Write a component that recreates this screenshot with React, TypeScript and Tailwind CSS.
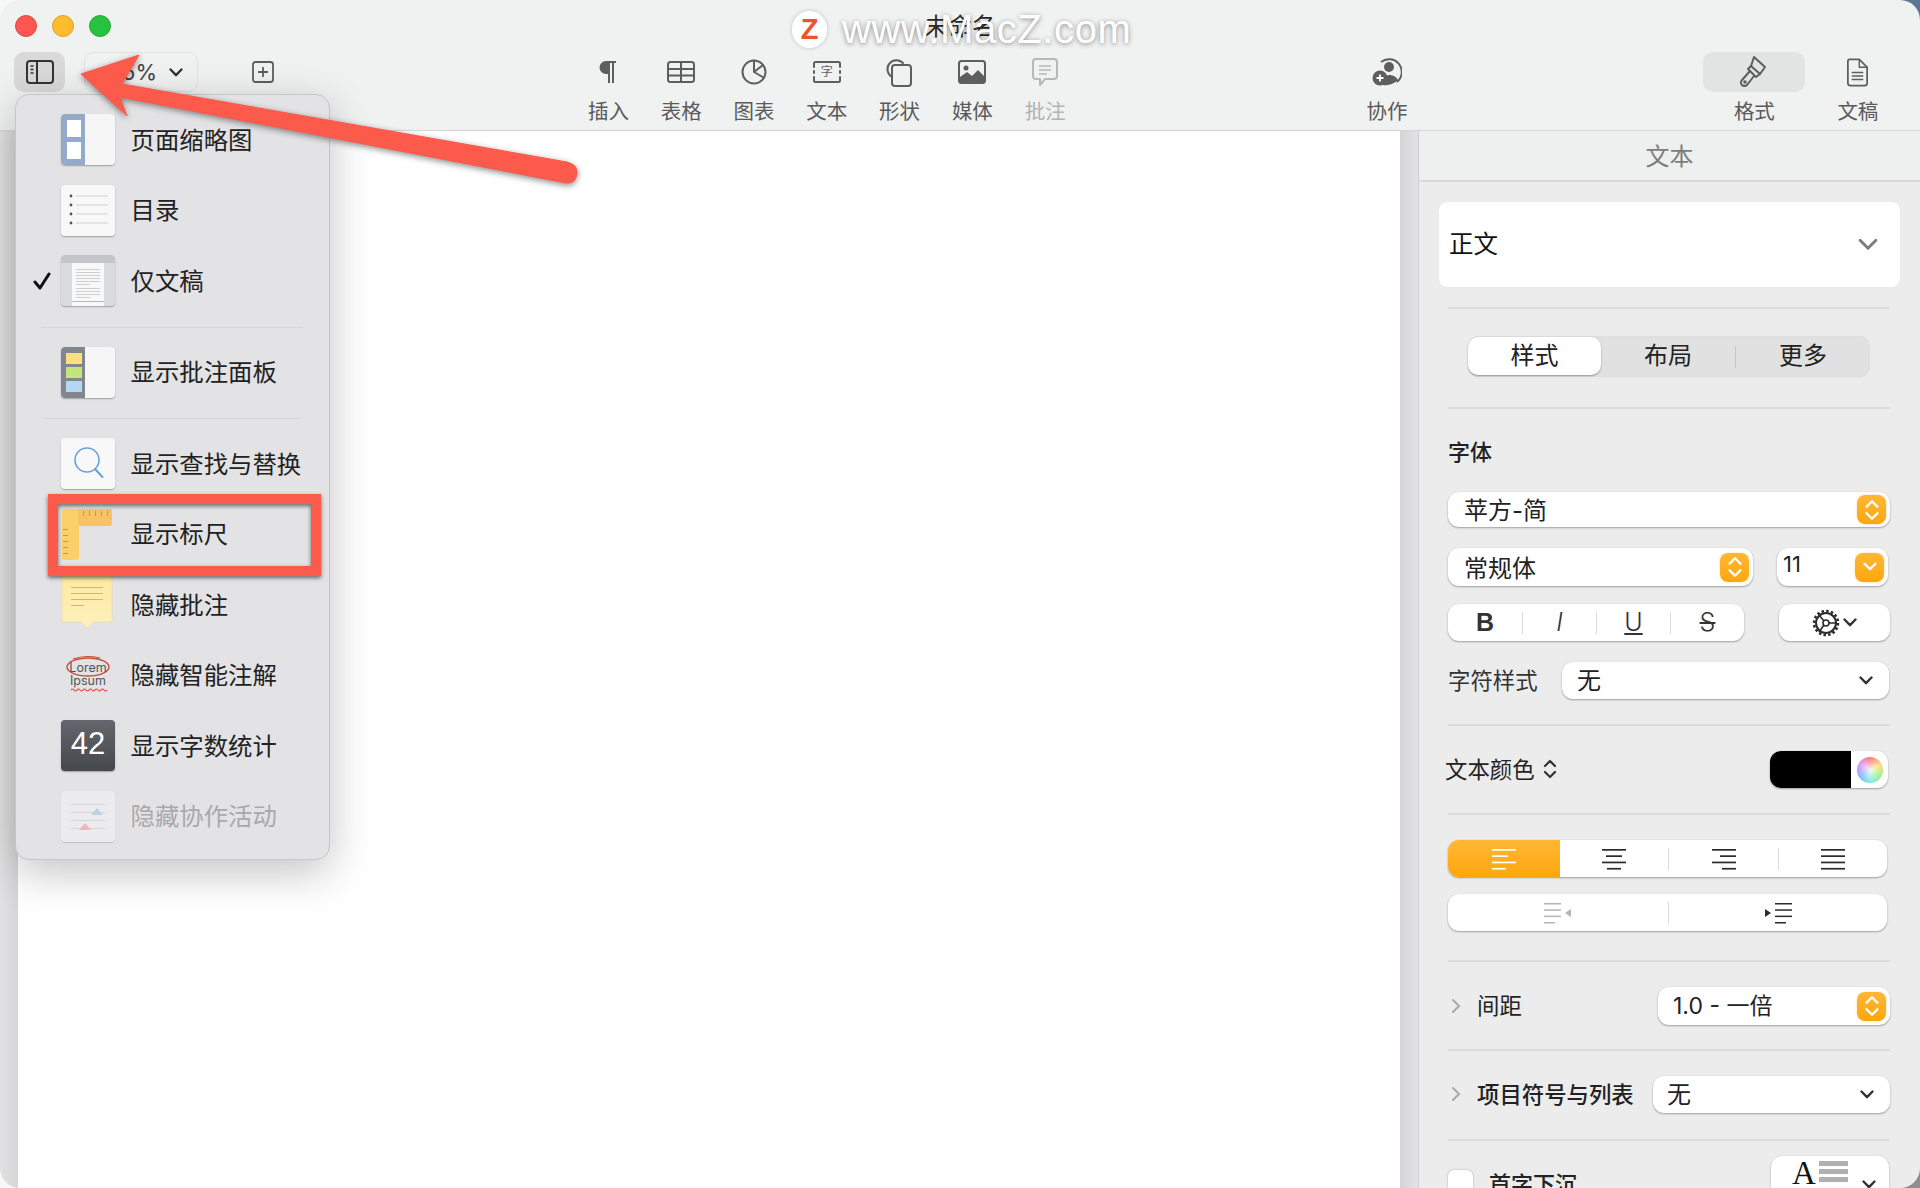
import React from "react";

const ctl = "bg-white rounded-[11px] shadow-[0_1px_2px_rgba(0,0,0,0.32),0_0_1px_rgba(0,0,0,0.12)]";
const hr = "h-[2px] w-[442px] bg-[#dcdcdc]";
const Chevron = ({ w = 14, h = 9, c = "#333", sw = 2.4 }: { w?: number; h?: number; c?: string; sw?: number }) => (
  <svg width={w} height={h} viewBox="0 0 14 9" fill="none"><path d="M1.5 1.5 7 7.2l5.5-5.7" stroke={c} strokeWidth={sw} strokeLinecap="round" strokeLinejoin="round" /></svg>
);
const Stepper = ({ single }: { single?: boolean }) => (
  <div className="w-[29px] h-[29px] rounded-[8px] bg-linear-to-b from-[#ffb733] to-[#ffa608] flex items-center justify-center shadow-[0_0_2px_rgba(255,170,20,0.5)]">
    <svg width="18" height="24" viewBox="0 0 16 22" fill="none" stroke="#fff" strokeWidth="2.2" strokeLinecap="round" strokeLinejoin="round">
      {single ? <path d="M3 8l5 5 5-5" /> : <><path d="M3 8l5-5 5 5" /><path d="M3 14l5 5 5-5" /></>}
    </svg>
  </div>
);

const Tool = ({ label, children, dim, active, className = "w-[72.8px]" }: { label: string; children: React.ReactNode; dim?: boolean; active?: boolean; className?: string }) => (
  <div className={`flex flex-col items-center ${className}`}>
    <div className={`h-10 w-full flex items-center justify-center rounded-[10px] ${active ? "bg-[#e2e3e3]" : ""}`}>{children}</div>
    <div className={`mt-[6px] text-[20.5px] leading-[28px] ${dim ? "text-[#b3b3b3]" : "text-[#5a5a5a]"}`}>{label}</div>
  </div>
);

const stroke = { fill: "none", stroke: "#5e5e5e", strokeWidth: 2, strokeLinecap: "round", strokeLinejoin: "round" } as const;

const LinesIcon = ({ a, c = "#2b2b2b" }: { a: "l" | "c" | "r" | "j"; c?: string }) => {
  const ws = a === "j" ? [24, 24, 24, 24] : [24, 16, 24, 14];
  return (
    <svg width="24" height="22" viewBox="0 0 24 22">
      {ws.map((w, i) => {
        const x = a === "l" || a === "j" ? 0 : a === "c" ? (24 - w) / 2 : 24 - w;
        return <rect key={i} x={x} y={1 + i * 6.3} width={w} height="1.7" fill={c} />;
      })}
    </svg>
  );
};

const base = "block rounded-[4px] shadow-[0_1px_1.5px_rgba(0,0,0,0.3)]";
const IThumb = () => (
  <svg className={base} width="54" height="51" viewBox="0 0 54 51">
    <rect width="54" height="51" rx="3" fill="#f6f6f7" /><path d="M3 0h21v51H3a3 3 0 0 1-3-3V3a3 3 0 0 1 3-3z" fill="#94aacb" />
    <rect x="6" y="6" width="14" height="17" fill="#fff" /><rect x="6" y="28" width="14" height="17" fill="#fff" />
  </svg>
);
const IToc = () => (
  <svg className={base} width="54" height="51" viewBox="0 0 54 51">
    <rect width="54" height="51" rx="3" fill="#f8f8f8" />
    {[11, 20, 29, 38].map((y) => <g key={y}><circle cx="10" cy={y} r="1.4" fill="#555" /><rect x="15" y={y - 0.5} width="32" height="1" fill="#d0d0d0" /></g>)}
  </svg>
);
const IDoc = () => (
  <svg className={base} width="54" height="51" viewBox="0 0 54 51">
    <rect width="54" height="51" rx="3" fill="#dadbdd" /><path d="M3 0h48a3 3 0 0 1 3 3v5H0V3a3 3 0 0 1 3-3z" fill="#c4c5c8" />
    <rect x="11" y="8" width="32" height="43" fill="#f8f8f8" />
    {[14, 17, 20, 23, 26, 29, 33, 36, 39, 42].map((y, i) => <rect key={y} x="15" y={y} width={i === 5 || i === 9 ? 14 : 24} height="0.8" fill="#c4c4c4" />)}
    <rect x="11" y="46" width="32" height="1" fill="#b8b8b8" />
  </svg>
);
const IPanel = () => (
  <svg className={base} width="54" height="51" viewBox="0 0 54 51">
    <rect width="54" height="51" rx="3" fill="#f6f6f7" /><path d="M3 0h21v51H3a3 3 0 0 1-3-3V3a3 3 0 0 1 3-3z" fill="#82868e" />
    <rect x="5" y="6" width="16" height="11" fill="#fbdf85" /><rect x="5" y="20" width="16" height="11" fill="#c4e47f" /><rect x="5" y="34" width="16" height="11" fill="#b4d7f4" />
  </svg>
);
const IFind = () => (
  <svg className={base} width="54" height="51" viewBox="0 0 54 51">
    <rect width="54" height="51" rx="3" fill="#f8f8f9" /><circle cx="26" cy="22" r="12" fill="none" stroke="#6aa0d8" strokeWidth="1.6" /><path d="M34 31l7.5 8" stroke="#6aa0d8" strokeWidth="2" strokeLinecap="round" />
  </svg>
);
const IRuler = () => (
  <svg width="54" height="51" viewBox="0 0 54 51" className="block">
    <rect x="1" y="0" width="17" height="51" rx="2" fill="#fbd06a" /><rect x="17" y="0" width="34" height="17" rx="2" fill="#f6c465" />
    {[22, 28, 34, 40, 46].map((x) => <rect key={x} x={x} y="2" width="1" height="5" fill="#c99a3f" />)}
    {[20, 26, 32, 38, 44].map((y) => <rect key={y} x="2" y={y} width="5" height="1" fill="#c99a3f" />)}
  </svg>
);
const INote = () => (
  <svg width="54" height="56" viewBox="0 0 54 56" className="block -mt-[3px]">
    <defs><linearGradient id="nt" x1="0" y1="0" x2="0" y2="1"><stop offset="0" stopColor="#fdeaa0" /><stop offset="1" stopColor="#fdf0bc" /></linearGradient></defs>
    <path d="M1 0h50v45a2 2 0 0 1-2 2H32l-6 6-6-6H3a2 2 0 0 1-2-2z" fill="url(#nt)" stroke="#e7d7a0" strokeWidth="0.6" />
    {[12, 18, 24, 30].map((y, i) => <rect key={y} x="10" y={y} width={i === 3 ? 13 : 32} height="0.9" fill="#c9b36e" />)}
  </svg>
);
const ILorem = () => (
  <svg width="54" height="51" viewBox="0 0 54 51" className="block">
    <ellipse cx="27" cy="17" rx="21" ry="9" fill="none" stroke="#c94a3a" strokeWidth="1.4" />
    <path d="M12 9c8-3 18-3 27-1" fill="none" stroke="#c94a3a" strokeWidth="1.2" />
    <text x="27" y="21.5" textAnchor="middle" fontSize="12.5" fill="#555" fontFamily="Inter, sans-serif">Lorem</text>
    <text x="27" y="35" textAnchor="middle" fontSize="12.5" fill="#555" fontFamily="Inter, sans-serif">Ipsum</text>
    <path d="M10 40q1.5-2 3 0t3 0 3 0 3 0 3 0 3 0 3 0 3 0 3 0 3 0 3 0 3 0" fill="none" stroke="#d9483a" strokeWidth="1.1" />
  </svg>
);
const ICount = () => (
  <div className={`${base} w-[54px] h-[51px] bg-linear-to-b from-[#63666c] to-[#45484d] text-white text-[31px] leading-[48px] text-center font-['Liberation_Sans',sans-serif]`}>42</div>
);
const ICollab = () => (
  <svg className="block rounded-[4px] shadow-[0_0.5px_1px_rgba(0,0,0,0.15)]" width="54" height="51" viewBox="0 0 54 51">
    <rect width="54" height="51" rx="3" fill="#ececef" />
    {[13, 21, 29, 37].map((y) => <rect key={y} x="10" y={y} width="34" height="0.9" fill="#d4d4d6" />)}
    <path d="M30 24l6-7 6 7z" fill="#b6d3ea" /><path d="M18 39l6-7 6 7z" fill="#f0b6c0" />
  </svg>
);

const MenuRow = ({ icon, label, checked, dim }: { icon: React.ReactNode; label: string; checked?: boolean; dim?: boolean }) => (
  <div className="h-[70.5px] flex items-center pl-[17px]">
    <div className="w-[18px] mr-[10px]">
      {checked && <svg width="18" height="18" viewBox="0 0 18 18" fill="none"><path d="M2 10l5 6L16 2" stroke="#111" strokeWidth="3" strokeLinecap="round" strokeLinejoin="round" /></svg>}
    </div>
    <div className="w-[54px] -mt-[1px]">{icon}</div>
    <div className={`ml-[15.500px] text-[24.400px] ${dim ? "text-[#a9a9ab]" : "text-[#222]"}`}>{label}</div>
  </div>
);
const MenuSep = () => (
  <div className="h-[21px] flex items-center pl-[25px]"><div className="h-[1px] w-[262px] bg-[#d5d5d7]" /></div>
);

export default function App() {
  return (
    <div className="relative w-[1920px] h-[1188px] overflow-hidden bg-linear-to-b from-[#5b7595] to-[#8f8f8f] font-['Inter','Noto_Sans_CJK_SC',sans-serif] text-[#222]">
      <div className="absolute left-0 top-0 bottom-0 w-[60px] bg-[#f8f8f8]" />
      <div className="relative h-full rounded-[20px] overflow-hidden flex flex-col">
        {/* title bar */}
        <div className="h-[52px] bg-[#f0f1f1] relative flex items-center pl-[15px] gap-[15px]">
          <div className="w-[22px] h-[22px] rounded-full bg-[#fc5753] border border-[#e0443e]" />
          <div className="w-[22px] h-[22px] rounded-full bg-[#fdbc2e] border border-[#dea123]" />
          <div className="w-[22px] h-[22px] rounded-full bg-[#27c33f] border border-[#1dad2b]" />
          <div className="absolute left-0 right-0 top-[10px] text-center text-[24px] leading-[34px] text-[#2a2a2a]">未命名</div>
        </div>
        {/* toolbar */}
        <div className="h-[79px] bg-[#f0f1f1] border-b border-[#d6d6d6] flex items-start pl-[14px]">
          <div className="w-[51px] h-10 rounded-[10px] bg-[#d9d9d9] flex items-center justify-center">
            <svg width="28" height="24" viewBox="0 0 28 24" fill="none" stroke="#333" strokeWidth="2"><rect x="1" y="1" width="26" height="22" rx="3" /><path d="M11 1v22" /><path d="M4.5 6h3M4.5 9.500h3M4.500 13h3" strokeWidth="1.400" /></svg>
          </div>
          <div className="ml-[19px] w-[114px] h-10 rounded-[10px] border border-[#e2e2e2] flex items-center justify-end pr-[14px] gap-[12px]">
            <span className="text-[22px] text-[#444]">75%</span>
            <Chevron />
          </div>
          <div className="ml-[54px] w-[22px] h-10 flex items-center justify-center">
            <svg width="22" height="22" viewBox="0 0 22 22" fill="none" stroke="#5e5e5e" strokeWidth="1.800"><rect x="1" y="1" width="20" height="20" rx="2.500" /><path d="M11 6v10M6 11h10" /></svg>
          </div>
          <div className="ml-[298px] flex">
            <Tool label="插入">
              <svg width="20" height="24" viewBox="0 0 20 24"><path d="M18 1H8a6.500 6.500 0 0 0 0 13h2v9h2V3h2v20h2V3h2z" fill="#5e5e5e" /></svg>
            </Tool>
            <Tool label="表格">
              <svg width="28" height="22" viewBox="0 0 28 22" {...stroke}><rect x="1" y="1" width="26" height="20" rx="2.500" /><path d="M1 8h26M1 14.500h26M14 1v20" /></svg>
            </Tool>
            <Tool label="图表">
              <svg width="26" height="26" viewBox="0 0 26 26" {...stroke}><circle cx="13" cy="13" r="11.500" /><path d="M13 1.500V13l9.500 5.500M13 13l9-7" /></svg>
            </Tool>
            <Tool label="文本">
              <div className="relative w-[28px] h-[22px]">
                <svg width="28" height="22" viewBox="0 0 28 22" className="absolute inset-0" {...stroke}><path d="M1 6V2.500A1.500 1.500 0 0 1 2.500 1h23A1.500 1.500 0 0 1 27 2.500V6M1 16v3.500A1.500 1.500 0 0 0 2.500 21h23a1.500 1.500 0 0 0 1.500-1.500V16M1 10v2M27 10v2" /></svg>
                <div className="absolute inset-0 flex items-center justify-center text-[12px] leading-none text-[#5e5e5e]">字</div>
              </div>
            </Tool>
            <Tool label="形状">
              <svg className="-ml-[4px]" width="28" height="30" viewBox="0 0 28 30" {...stroke}><path d="M8 20A9 9 0 1 1 19 6" /><rect x="8" y="8" width="19" height="21" rx="3" /></svg>
            </Tool>
            <Tool label="媒体">
              <svg width="28" height="24" viewBox="0 0 28 24"><rect x="1" y="1" width="26" height="22" rx="2.500" fill="none" stroke="#5e5e5e" strokeWidth="2" /><circle cx="8" cy="8" r="2.500" fill="#5e5e5e" /><path d="M2 22v-5l7-5 5 4 6-6 6 6v6z" fill="#5e5e5e" /></svg>
            </Tool>
            <Tool label="批注" dim>
              <svg width="26" height="28" viewBox="0 0 26 28" fill="none" stroke="#b8b8b8" strokeWidth="2" strokeLinejoin="round"><path d="M4 1h18a3 3 0 0 1 3 3v14a3 3 0 0 1-3 3H13l-5 6v-6H4a3 3 0 0 1-3-3V4a3 3 0 0 1 3-3z" /><path d="M7 8h12M7 12h12M7 16h8" strokeWidth="1.600" /></svg>
            </Tool>
          </div>
          <div className="ml-[269px]">
            <Tool label="协作">
              <svg width="30" height="30" viewBox="0 0 30 30"><path d="M9 5A12 12 0 1 1 25 25" fill="none" stroke="#5e5e5e" strokeWidth="2" /><circle cx="17" cy="10" r="5" fill="#5e5e5e" /><path d="M11 28c0-6 3-10 6-10s7 1 9 5c-3 3-9 6-15 5z" fill="#5e5e5e" /><circle cx="8" cy="21" r="7.500" fill="#5e5e5e" /><path d="M8 17.500v7M4.500 21h7" stroke="#fff" strokeWidth="1.800" /></svg>
            </Tool>
          </div>
          <div className="ml-[280px]">
            <Tool label="格式" active className="w-[102px]">
              <svg width="28" height="34" viewBox="0 0 28 34" {...stroke}><path d="M14 2l11 10-5 7-9-8z" /><path d="M11 11l-3 3 8 8 4-3" /><path d="M10 16l-8 9a3.500 3.500 0 0 0 5 5l7-9" /><circle cx="5" cy="27" r="0.800" /></svg>
            </Tool>
          </div>
          <div className="ml-[16px]">
            <Tool label="文稿" className="w-[73px]">
              <svg width="21" height="29" viewBox="0 0 24 32" {...stroke}><path d="M3 1h11l9 9v18a3 3 0 0 1-3 3H4a3 3 0 0 1-3-3V3a2 2 0 0 1 2-2z" /><path d="M14 1v9h9M6 16h12M6 20h12M6 24h12" strokeWidth="1.600" /></svg>
            </Tool>
          </div>
        </div>
        {/* body */}
        <div className="flex-1 flex min-h-0">
          <div className="w-[18px] bg-[linear-gradient(to_right,#e2e2e3,#d5d5d7)]" />
          <div className="flex-1 bg-white" />
          <div className="w-[18px] bg-[linear-gradient(to_right,#d4d4d6,#e3e3e5)]" />
          <div className="w-[502px] bg-[#ececec] border-l border-[#cfcfcf] overflow-hidden">
            <div className="h-[51px] border-b-2 border-[#dadada] bg-[#eef0f0] text-[24px] leading-[52px] text-center text-[#7d7d7d]">文本</div>
            <div className="mt-[20px] ml-[20px] w-[461px] h-[85px] bg-white rounded-[8px] flex items-center justify-between pl-[10px] pr-[22px] shadow-[0_0_1px_rgba(0,0,0,0.1)]">
              <span className="text-[24.500px] text-[#111]">正文</span>
              <Chevron w={20} h={13} c="#7c7c7c" sw={2} />
            </div>
            <div className="pl-[29px]">
              <div className={`mt-[20px] ${hr}`} />
              <div className="mt-[27px] ml-[20px] w-[402px] h-[41px] rounded-[11px] bg-[#e1e1e1] flex items-center text-[24px] leading-[36px] shadow-[inset_0_0_1px_rgba(0,0,0,0.15)]">
                <div className="w-[133px] h-[38px] -mt-[1px] rounded-[10px] bg-white flex items-center justify-center shadow-[0_1px_2px_rgba(0,0,0,0.35)]">样式</div>
                <div className="w-[134px] text-center -mt-[2px]">布局</div>
                <div className="w-[1px] h-[22px] bg-[#c8c8c8]" />
                <div className="flex-1 text-center -mt-[2px]">更多</div>
              </div>
              <div className={`mt-[30px] ${hr}`} />
              <div className="mt-[28px] h-[30px] leading-[30px] text-[22px] font-medium">字体</div>
              <div className={`mt-[25px] w-[442px] h-[35px] ${ctl} flex items-center justify-between pl-[16px] pr-[4px] text-[24px]`}>
                <span className="mt-[3px]">苹方-简</span><Stepper />
              </div>
              <div className="mt-[21px] flex justify-between w-[440px] h-[38px]">
                <div className={`w-[305px] ${ctl} flex items-center justify-between pl-[16px] pr-[4px] text-[24px]`}><span className="mt-[3px]">常规体</span><Stepper /></div>
                <div className={`w-[111px] ${ctl} flex items-center justify-between pl-[6px] pr-[4px] text-[22px]`}><span className="-mt-[6px]">11</span><Stepper single /></div>
              </div>
              <div className="mt-[18px] flex justify-between w-[442px] h-[37px]">
                <div className={`w-[296px] ${ctl} flex items-center text-[25px] text-[#333]`}>
                  <div className="w-[74px] text-center font-bold font-['Liberation_Sans',sans-serif]">B</div>
                  <div className="w-[1px] h-[22px] bg-[#dcdcdc]" />
                  <div className="w-[73px] text-center italic font-light">I</div>
                  <div className="w-[1px] h-[22px] bg-[#dcdcdc]" />
                  <div className="w-[73px] text-center underline font-light">U</div>
                  <div className="w-[1px] h-[22px] bg-[#dcdcdc]" />
                  <div className="flex-1 text-center line-through font-light">S</div>
                </div>
                <div className={`w-[111px] ${ctl} flex items-center justify-center gap-[3px]`}>
                  <svg width="28" height="28" viewBox="0 0 28 28" fill="none" stroke="#2b2b2b"><circle cx="14" cy="14" r="10" strokeWidth="2" /><circle cx="14" cy="14" r="12" strokeWidth="2.500" strokeDasharray="2.500 2.200" /><circle cx="14" cy="14" r="3" strokeWidth="1.600" /><path d="M7 6l5 6M17 14h8M12 16l-5 7" strokeWidth="1.600" /></svg>
                  <Chevron />
                </div>
              </div>
              <div className="mt-[21px] flex items-center justify-between w-[441px] h-[37px]">
                <span className="text-[22.400px] text-[#333]">字符样式</span>
                <div className={`w-[327px] h-full ${ctl} flex items-center justify-between pl-[15px] pr-[16px] text-[24px]`}><span>无</span><Chevron /></div>
              </div>
              <div className={`mt-[25px] ${hr}`} />
              <div className="mt-[25px] flex items-center justify-between w-[440px] h-[37px]">
                <div className="flex items-center -ml-[3px] text-[22.400px] gap-[8px]">
                  <span className="mt-[1px]">文本颜色</span>
                  <svg width="14" height="22" viewBox="0 0 14 22" fill="none" stroke="#333" strokeWidth="2.200" strokeLinecap="round" strokeLinejoin="round"><path d="M2 8l5-5 5 5M2 14l5 5 5-5" /></svg>
                </div>
                <div className={`w-[118px] h-full ${ctl} flex overflow-hidden`}>
                  <div className="w-[81px] bg-black" />
                  <div className="flex-1 flex items-center justify-center">
                    <div className="w-[26px] h-[26px] rounded-full bg-[radial-gradient(circle,rgba(255,255,255,0.85),rgba(255,255,255,0)_75%),conic-gradient(#ff6b6b,#ffd76b,#8ef07a,#6fe8e0,#7aa8ff,#d68bff,#ff6b6b)]" />
                  </div>
                </div>
              </div>
              <div className={`mt-[25px] ${hr}`} />
              <div className={`mt-[25px] w-[439px] h-[37px] ${ctl} flex items-center overflow-hidden`}>
                <div className="w-[112px] h-full bg-linear-to-b from-[#ffb733] to-[#ffa608] flex items-center justify-center"><LinesIcon a="l" c="#fff" /></div>
                <div className="w-[108px] flex justify-center"><LinesIcon a="c" /></div>
                <div className="w-[1px] h-[22px] bg-[#dcdcdc]" />
                <div className="w-[109px] flex justify-center"><LinesIcon a="r" /></div>
                <div className="w-[1px] h-[22px] bg-[#dcdcdc]" />
                <div className="flex-1 flex justify-center"><LinesIcon a="j" /></div>
              </div>
              <div className={`mt-[17px] w-[439px] h-[37px] ${ctl} flex items-center`}>
                <div className="w-[220px] flex justify-center">
                  <svg width="28" height="22" viewBox="0 0 28 22" fill="#b5b5b5"><rect x="0" y="1" width="17" height="1.500" /><rect x="0" y="7.300" width="17" height="1.500" /><rect x="0" y="13.600" width="17" height="1.500" /><rect x="0" y="20" width="11" height="1.500" /><path d="M27 7v8l-6-4z" /></svg>
                </div>
                <div className="w-[1px] h-[22px] bg-[#dcdcdc]" />
                <div className="flex-1 flex justify-center">
                  <svg width="28" height="22" viewBox="0 0 28 22" fill="#2b2b2b"><rect x="11" y="1" width="17" height="1.500" /><rect x="11" y="7.300" width="17" height="1.500" /><rect x="11" y="13.600" width="17" height="1.500" /><rect x="11" y="20" width="11" height="1.500" /><path d="M1 7v8l6-4z" /></svg>
                </div>
              </div>
              <div className={`mt-[29px] ${hr}`} />
              <div className="mt-[25px] flex items-center justify-between w-[442px] h-[38px]">
                <div className="flex items-center text-[22.400px]">
                  <svg className="ml-[3px]" width="10" height="16" viewBox="0 0 10 16" fill="none" stroke="#a9a9a9" strokeWidth="2" strokeLinecap="round"><path d="M2 2l6 6-6 6" /></svg>
                  <span className="ml-[16px]">间距</span>
                </div>
                <div className={`w-[232px] h-full ${ctl} flex items-center justify-between pl-[15px] pr-[4px] text-[23px]`}><span>1.0 - 一倍</span><Stepper /></div>
              </div>
              <div className={`mt-[24px] ${hr}`} />
              <div className="mt-[25px] flex items-center justify-between w-[442px] h-[37px]">
                <div className="flex items-center text-[22.400px] font-medium">
                  <svg className="ml-[3px]" width="10" height="16" viewBox="0 0 10 16" fill="none" stroke="#a9a9a9" strokeWidth="2" strokeLinecap="round"><path d="M2 2l6 6-6 6" /></svg>
                  <span className="ml-[16px]">项目符号与列表</span>
                </div>
                <div className={`w-[237px] h-full ${ctl} flex items-center justify-between pl-[14px] pr-[16px] text-[24px]`}><span>无</span><Chevron /></div>
              </div>
              <div className={`mt-[26px] ${hr}`} />
              <div className="mt-[15px] flex justify-between w-[441px] h-[60px]">
                <div className="flex items-start pt-[14px]">
                  <div className="w-[25px] h-[25px] bg-white rounded-[6px] shadow-[0_0_2px_rgba(0,0,0,0.35)]" />
                  <span className="ml-[16px] text-[22px] leading-[28px] font-medium">首字下沉</span>
                </div>
                <div className={`w-[118px] h-[60px] ${ctl} relative flex justify-center gap-[3px] pr-[20px]`}>
                  <span className="font-['Liberation_Serif',serif] text-[33px] leading-[34px] text-[#111]">A</span>
                  <div className="flex flex-col gap-[3px] mt-[5px]">
                    <div className="w-[29px] h-[5px] bg-[#b0b0b0]" /><div className="w-[29px] h-[5px] bg-[#b0b0b0]" /><div className="w-[29px] h-[5px] bg-[#b0b0b0]" />
                  </div>
                  <div className="absolute right-[13px] top-[24px]"><Chevron /></div>
                </div>
              </div>
            </div>
          </div>
        </div>
      </div>

      {/* popup menu */}
      <div className="absolute left-[15px] top-[94px] w-[315px] h-[766px] rounded-[14px] bg-[#e3e3e5] border border-[#c6c6c8] pt-[10px] shadow-[0_12px_44px_rgba(0,0,0,0.24)]">
        <MenuRow icon={<IThumb />} label="页面缩略图" />
        <MenuRow icon={<IToc />} label="目录" />
        <MenuRow icon={<IDoc />} label="仅文稿" checked />
        <MenuSep />
        <MenuRow icon={<IPanel />} label="显示批注面板" />
        <MenuSep />
        <MenuRow icon={<IFind />} label="显示查找与替换" />
        <MenuRow icon={<IRuler />} label="显示标尺" />
        <MenuRow icon={<INote />} label="隐藏批注" />
        <MenuRow icon={<ILorem />} label="隐藏智能注解" />
        <MenuRow icon={<ICount />} label="显示字数统计" />
        <MenuRow icon={<ICollab />} label="隐藏协作活动" dim />
      </div>

      {/* red highlight box */}
      <div className="absolute left-[48px] top-[494px] w-[273px] h-[82px] border-[10px] border-[#fc5a4b] shadow-[0_2px_4px_rgba(0,0,0,0.55),inset_0_2px_4px_rgba(0,0,0,0.55)]" />

      {/* red arrow */}
      <svg className="absolute left-0 top-0 drop-shadow-[0_2px_3px_rgba(0,0,0,0.45)]" width="600" height="200" viewBox="0 0 600 200">
        <path d="M81 74 139 55 122 84 567 162Q578 165 577 173 576 184 566 183L120 97 127 116Z" fill="#fc5a4b" stroke="#fc5a4b" strokeWidth="1" strokeLinejoin="round" />
      </svg>

      {/* watermark */}
      <div className="absolute left-[792px] top-[11px] flex items-center h-[37px]">
        <div className="w-[35px] h-[37px] rounded-full bg-white flex items-center justify-center text-[29px] font-bold leading-none text-[#f0532a] font-['Liberation_Sans',sans-serif] shadow-[0_0_4px_rgba(0,0,0,0.2)]">Z</div>
        <div className="ml-[15px] text-[40px] leading-[37px] tracking-[0.6px] text-white font-['Liberation_Sans',sans-serif] [text-shadow:0_1px_5px_rgba(0,0,0,0.45)]">www.MacZ.com</div>
      </div>
    </div>
  );
}
